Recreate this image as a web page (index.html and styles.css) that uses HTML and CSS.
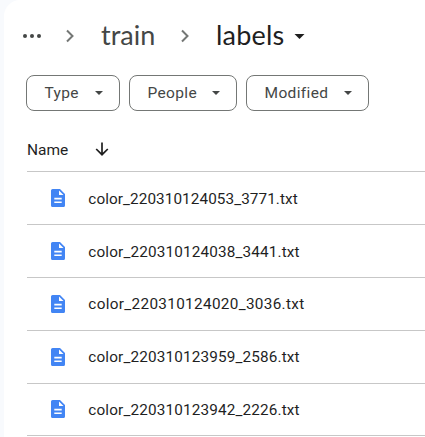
FILE: index.html
```html
<!DOCTYPE html>
<html lang="en">
<head>
<meta charset="utf-8">
<title>labels</title>
<link rel="stylesheet" href="styles.css">
</head>
<body>
<svg class="defs" aria-hidden="true">
  <symbol id="chevron" viewBox="0 0 8 14"><path d="M1 1.5 6.5 7 1 12.5" fill="none" stroke="currentColor" stroke-width="2"/></symbol>
  <symbol id="caret" viewBox="0 0 10 5"><path d="M0 0h10L5 5z" fill="currentColor"/></symbol>
  <symbol id="doc" viewBox="0 0 14 18"><path fill="#4285f4" fill-rule="evenodd" d="M1.6 0H9l5 5v11.4A1.6 1.6 0 0 1 12.4 18H1.6A1.6 1.6 0 0 1 0 16.4V1.6A1.6 1.6 0 0 1 1.6 0zM8 1.5V6h4.5zM3.3 8.8v1.6h7.4V8.8zm0 3.6V14h7.4v-1.6z"/></symbol>
</svg>
<main class="panel">
  <nav class="crumbs">
    <svg class="dots" viewBox="0 0 18 4"><g fill="#444746"><circle cx="2" cy="2" r="2"/><circle cx="9" cy="2" r="2"/><circle cx="16" cy="2" r="2"/></g></svg>
    <svg class="chevron first"><use href="#chevron"/></svg>
    <span class="crumb parent">train</span>
    <svg class="chevron second"><use href="#chevron"/></svg>
    <span class="crumb current">labels</span>
    <svg class="caret large"><use href="#caret"/></svg>
  </nav>
  <div class="filters">
    <button class="chip type"><span>Type</span><svg class="caret"><use href="#caret"/></svg></button>
    <button class="chip people"><span>People</span><svg class="caret"><use href="#caret"/></svg></button>
    <button class="chip modified"><span>Modified</span><svg class="caret"><use href="#caret"/></svg></button>
  </div>
  <section class="list">
    <header class="head"><span>Name</span><svg class="arrow" viewBox="0 0 14 14"><path d="M7 .5v12M1.2 7 7 12.7 12.8 7" fill="none" stroke="#1f1f1f" stroke-width="1.7"/></svg></header>
    <div class="row"><svg class="doc"><use href="#doc"/></svg><span class="file narrow">color_220310124053_3771.txt</span></div>
    <div class="row"><svg class="doc"><use href="#doc"/></svg><span class="file">color_220310124038_3441.txt</span></div>
    <div class="row"><svg class="doc"><use href="#doc"/></svg><span class="file wide">color_220310124020_3036.txt</span></div>
    <div class="row"><svg class="doc"><use href="#doc"/></svg><span class="file">color_220310123959_2586.txt</span></div>
    <div class="row"><svg class="doc"><use href="#doc"/></svg><span class="file">color_220310123942_2226.txt</span></div>
  </section>
</main>
</body>
</html>
```
FILE: styles.css
```css
* { box-sizing: border-box; }
body { margin: 0; height: 437px; overflow: hidden; background: #f8fafd; font-family: Roboto, "Liberation Sans", sans-serif; color: #1f1f1f; }
svg { display: block; flex: none; }
.defs { display: none; }
.panel { margin-left: 4px; height: 437px; padding-left: 22px; background: #fff; border-top-left-radius: 16px; overflow: hidden; }
.crumbs { display: flex; align-items: center; height: 75px; padding: 0 0 3px; }
.dots { width: 18px; height: 4px; margin-left: -3px; }
.chevron { width: 8px; height: 14px; color: #747775; }
.chevron.first { margin-left: 25px; }
.crumb { font-family: Lato, sans-serif; font-size: 27px; line-height: 36px; white-space: nowrap; padding-bottom: 2px; }
.parent { width: 80px; margin-left: 27px; color: #444746; letter-spacing: 0; }
.current { width: 78px; margin-left: 27px; letter-spacing: .2px; }
.caret { width: 8px; height: 4px; color: #444746; }
.caret.large { width: 11px; height: 5px; color: #1f1f1f; }
.filters { display: flex; gap: 9px; }
.chip { display: flex; align-items: center; justify-content: space-between; height: 36px; padding: 0 16px 0 17.5px; border: 1px solid #747775; border-radius: 8px; background: #fff; color: #444746; font: 400 15.5px/20px Roboto, sans-serif; letter-spacing: .35px; }
.type { width: 94px; }
.people { width: 108px; }
.modified { width: 123px; }
.head { display: flex; align-items: center; height: 60.4px; padding-top: 17px; font-size: 15.5px; line-height: 20px; }
.head span { width: 68px; }
.head .arrow { width: 14px; height: 14px; margin-bottom: 1px; }
.list { margin-left: 1px; }
.row { display: flex; align-items: center; height: 52.8px; border-top: 1px solid #c7c7c7; padding-left: 24px; }
.row:last-child { border-bottom: 1px solid #c7c7c7; height: 53.8px; }
.doc { width: 14px; height: 18px; margin-right: 23.3px; }
.file { font-family: Roboto, sans-serif; font-size: 15.3px; line-height: 20px; white-space: nowrap; letter-spacing: .15px; padding-top: 1px; }
.narrow { letter-spacing: .08px; }
.wide { letter-spacing: .33px; }
```
